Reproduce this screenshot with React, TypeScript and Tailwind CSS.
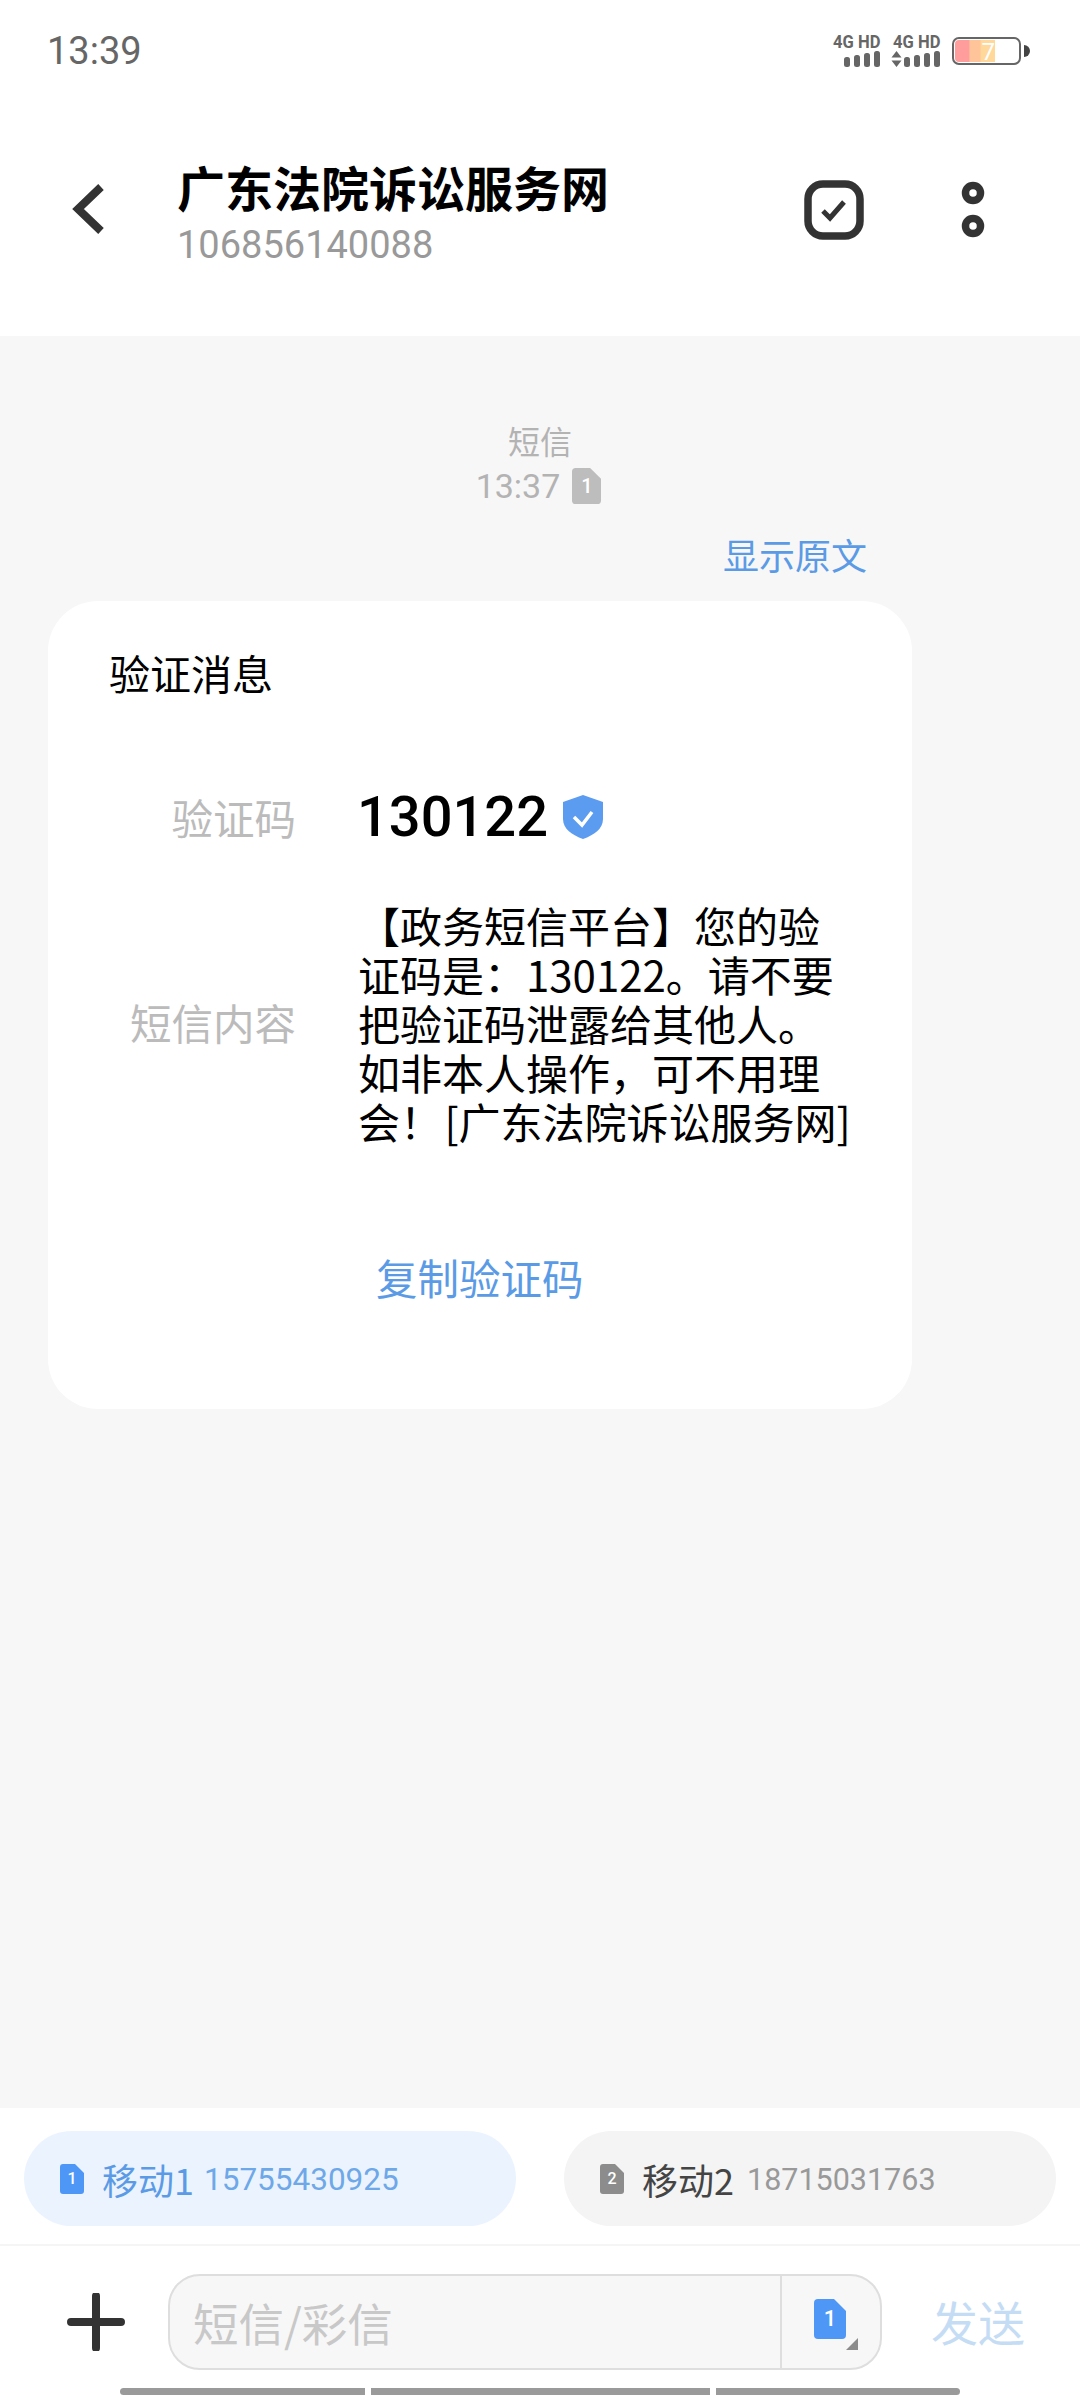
import React from "react";

const cjk = { fontFamily: '"Noto Sans CJK SC", "Noto Sans", sans-serif' };
const rob = { fontFamily: 'Roboto, "Noto Sans CJK SC", sans-serif' };

function Signal({ bars, arrows }: { bars: number[]; arrows?: boolean }) {
  return (
    <div className="flex flex-col items-end w-[49px]">
      <span className="text-[18px] leading-[15px] font-bold text-[#666] scale-x-[0.92] origin-right whitespace-pre" style={rob}>4G HD</span>
      <div className="flex items-end gap-[4px] h-[16px] mt-[2px]">
        {arrows && (
          <svg width="11" height="16" viewBox="0 0 11 16" className="mr-[-2px]">
            <path d="M5.5 0l5 6.5H.5zM5.5 16l5-6.5H.5z" fill="#666" />
          </svg>
        )}
        {bars.map((h, i) => (
          <svg key={i} width="6" height={h} viewBox={`0 0 6 ${h}`}>
            <rect width="6" height={h} rx="2.5" fill="#666" />
          </svg>
        ))}
      </div>
    </div>
  );
}

function Sim({ n, bg, w, h, text }: { n: string; bg: string; w: number; h: number; text: number }) {
  return (
    <span className="relative inline-block shrink-0" style={{ width: w, height: h }}>
      <svg width={w} height={h} viewBox="0 0 24 30" preserveAspectRatio="none" className="block">
        <path d="M3 0h12l9 9v18a3 3 0 0 1-3 3H3a3 3 0 0 1-3-3V3a3 3 0 0 1 3-3z" fill={bg} />
      </svg>
      <span className="absolute inset-0 flex items-center justify-center text-white font-medium" style={{ ...rob, fontSize: text, lineHeight: 1 }}>{n}</span>
    </span>
  );
}

export default function App() {
  return (
    <div className="w-[1080px] h-[2400px] bg-white flex flex-col overflow-hidden" style={cjk}>
      {/* status bar */}
      <div className="h-[102px] pl-[47px] pr-[50px] flex items-start justify-between shrink-0">
        <span className="text-[38px] leading-[44px] mt-[29px] text-[#666]" style={rob}>13:39</span>
        <div className="flex items-start mt-[34px]">
          <Signal bars={[10, 12, 14, 16]} />
          <div className="w-[11px]" />
          <Signal bars={[10, 12, 14, 16]} arrows />
          <div className="flex items-center ml-[12px] mt-[3px]">
            <div className="w-[69px] h-[28px] rounded-[7px] border-2 border-[#666] p-[1px] overflow-hidden">
              <div className="h-full w-[40px] rounded-l-[4px] bg-[linear-gradient(90deg,#ff9c9c_0%,#ff9c9c_34%,#ffc49a_38%,#ffc49a_62%,#ffd89a_66%,#ffd89a_100%)] text-white text-[24px] leading-[24px] text-right whitespace-nowrap" style={rob}>7</div>
            </div>
            <svg width="6" height="12" viewBox="0 0 6 12" className="ml-[3px]"><path d="M0 0a6 6 0 0 1 0 12z" fill="#444" /></svg>
          </div>
        </div>
      </div>

      {/* header */}
      <div className="h-[234px] flex items-start shrink-0">
        <svg width="40" height="54" viewBox="0 0 40 54" className="ml-[69px] mt-[82px]">
          <path d="M32 3L9 25l23 22" fill="none" stroke="#333" strokeWidth="8" />
        </svg>
        <div className="ml-[68px] mt-[52px] flex flex-col">
          <span className="text-[48px] leading-[64px] font-bold text-black whitespace-nowrap">广东法院诉讼服务网</span>
          <span className="text-[38px] leading-[46px] text-[#999] mt-[4px]" style={rob}>106856140088</span>
        </div>
        <div className="ml-auto flex items-start mt-[78px]">
          <svg width="60" height="60" viewBox="0 0 60 60">
            <rect x="4" y="4" width="52" height="52" rx="15" fill="none" stroke="#333" strokeWidth="7.5" />
            <path d="M19 31l7 7 14-16" fill="none" stroke="#333" strokeWidth="5" />
          </svg>
          <svg width="24" height="60" viewBox="0 0 24 60" className="ml-[97px] mr-[95px]">
            <circle cx="12" cy="13" r="7.5" fill="none" stroke="#333" strokeWidth="7.5" />
            <circle cx="12" cy="46" r="7.5" fill="none" stroke="#333" strokeWidth="7.5" />
          </svg>
        </div>
      </div>

      {/* body */}
      <div className="flex-1 bg-[#f7f7f7] flex flex-col">
        <div className="pt-[82px] text-center text-[32px] leading-[44px] text-[#b3b3b3]">短信</div>
        <div className="flex items-center justify-center mt-[2px] gap-[12px] pr-[3px]">
          <span className="text-[34px] leading-[44px] text-[#b3b3b3]" style={rob}>13:37</span>
          <Sim n="1" bg="#bdbdbd" w={29} h={36} text={20} />
        </div>
        <div className="text-right pr-[213px] text-[36px] leading-[48px] text-[#5b9be6] mt-[22px]">显示原文</div>

        <div className="ml-[48px] w-[864px] h-[808px] mt-[23px] bg-white rounded-[50px] flex flex-col shrink-0">
          <div className="ml-[61px] mt-[47px] text-[41px] leading-[48px] text-black">验证消息</div>
          <div className="flex items-center mt-[91px] h-[60px]">
            <span className="w-[248px] text-right text-[41.5px] text-[#bbbbbb]">验证码</span>
            <span className="ml-[61px] text-[56px] leading-[60px] text-black font-medium" style={rob}>130122</span>
            <svg width="42" height="44" viewBox="0 0 42 44" className="ml-[14px]">
              <path d="M21 0l20 7v17c0 10-9 16-20 20C10 40 1 34 1 24V7z" fill="#5b9bf0" />
              <path d="M12 22l8 8 10-13" fill="none" stroke="#fff" strokeWidth="3.5" />
            </svg>
          </div>
          <div className="flex items-center mt-[53px]">
            <span className="w-[248px] text-right text-[41.5px] text-[#bbbbbb] whitespace-nowrap">短信内容</span>
            <p className="ml-[62px] text-[42px] leading-[49px] text-black whitespace-nowrap [word-spacing:-7px]">
              【政务短信平台】您的验<br />证码是：130122。请不要<br />把验证码泄露给其他人。<br />如非本人操作，可不用理<br />会！ [广东法院诉讼服务网]
            </p>
          </div>
          <div className="ml-[328px] mt-[107px] text-[41.5px] leading-[50px] text-[#5b9be6]">复制验证码</div>
        </div>
      </div>

      {/* sim chooser */}
      <div className="h-[138px] shrink-0 border-b-2 border-[#f5f5f5] flex justify-between px-[24px] pt-[23px]">
        <div className="w-[492px] h-[95px] rounded-full bg-[#ebf4fe] flex items-center pl-[36px]">
          <Sim n="1" bg="#4f97f7" w={24} h={30} text={16} />
          <span className="ml-[18px] text-[36px] text-[#5b9be6]">移动1</span>
          <span className="ml-[10px] mt-[3px] text-[31.5px] text-[#6ea8e8]" style={rob}>15755430925</span>
        </div>
        <div className="w-[492px] h-[95px] rounded-full bg-[#f4f4f4] flex items-center pl-[36px]">
          <Sim n="2" bg="#8c8c8c" w={24} h={30} text={16} />
          <span className="ml-[18px] text-[36px] text-[#444]">移动2</span>
          <span className="ml-[13px] mt-[3px] text-[30.5px] text-[#999]" style={rob}>18715031763</span>
        </div>
      </div>

      {/* composer */}
      <div className="h-[154px] shrink-0 flex flex-col">
        <div className="flex items-start pt-[28px]">
          <svg width="58" height="58" viewBox="0 0 58 58" className="ml-[67px] mt-[19px]">
            <path d="M29 3v52M4 29h50" fill="none" stroke="#333" strokeWidth="8" strokeLinecap="round" />
          </svg>
          <div className="ml-[43px] w-[714px] h-[96px] rounded-[32px] border-2 border-[#dedede] bg-[#f7f7f7] flex items-stretch">
            <div className="w-[612px] border-r-2 border-[#dedede] pl-[23px] flex items-center text-[45.5px] leading-[60px] text-[#c8c8c8]">短信/彩信</div>
            <div className="relative flex-1">
              <span className="absolute left-[32px] top-[23px]"><Sim n="1" bg="#4f97f7" w={32} h={40} text={22} /></span>
              <svg width="12" height="12" viewBox="0 0 12 12" className="absolute left-[64px] top-[62px]"><path d="M12 0v12H0z" fill="#8c8c8c" /></svg>
            </div>
          </div>
          <span className="ml-[49px] mt-[17px] text-[47px] leading-[60px] text-[#c5dcf5]">发送</span>
        </div>
        <div className="flex gap-[6px] ml-[120px] mt-[18px]">
          <div className="w-[245px] h-[7px] rounded-l-full bg-[#9a9a9a]" />
          <div className="w-[339px] h-[7px] bg-[#9a9a9a]" />
          <div className="w-[244px] h-[7px] rounded-r-full bg-[#9a9a9a]" />
        </div>
      </div>
    </div>
  );
}
